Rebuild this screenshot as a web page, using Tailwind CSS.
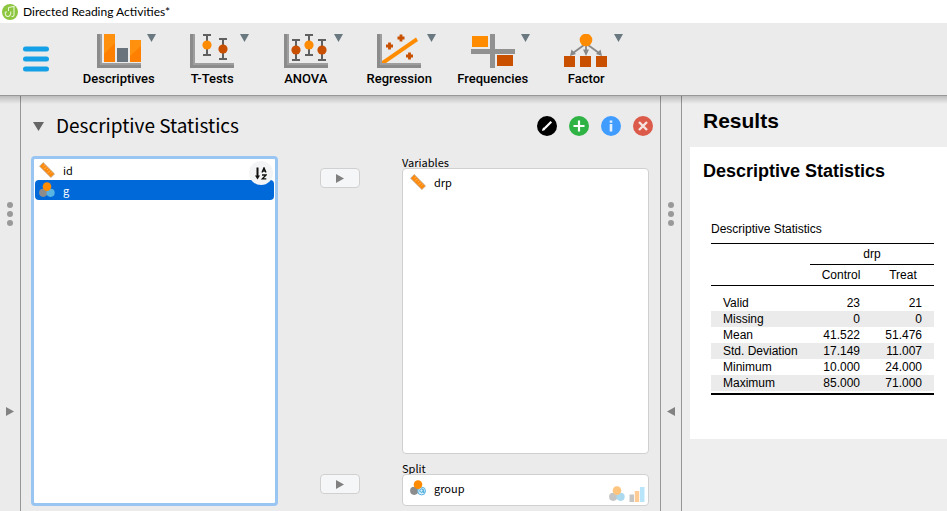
<!DOCTYPE html>
<html lang="en">
<head>
<meta charset="utf-8">
<title>Directed Reading Activities*</title>
<script src="https://cdn.jsdelivr.net/npm/@tailwindcss/browser@4"></script>
</head>
<body class="flex h-screen flex-col overflow-hidden bg-[#ebebeb] font-['Noto_Sans_CJK_JP',sans-serif] text-black">
<svg class="hidden" aria-hidden="true">
  <defs>
    <symbol id="scale" viewBox="0 0 16 16">
      <path d="M4.2 .6 L15.5 11.9 L11.9 15.5 L.6 4.2 Z" fill="#ff8a0c" stroke="#b9a48c" stroke-width=".8"/>
      <path d="M5.6 3.2 L4.4 4.4 M7.4 5 L5.4 7 M9.2 6.8 L8 8 M11 8.6 L9 10.6 M12.8 10.4 L11.6 11.6" stroke="#ffc076" stroke-width=".8"/>
    </symbol>
    <symbol id="nominal" viewBox="0 0 16 16">
      <circle cx="4.2" cy="10.8" r="4.1" fill="#8c8c8c"/>
      <circle cx="11.6" cy="10.8" r="4.1" fill="#59b4e2"/>
      <circle cx="8" cy="4.6" r="4.3" fill="#ff8c00"/>
    </symbol>
    <symbol id="nominal-text" viewBox="0 0 16 16">
      <circle cx="4.2" cy="10.8" r="4.1" fill="#8c8c8c"/>
      <circle cx="11.6" cy="11" r="3.9" fill="#d8effb" stroke="#59b4e2"/>
      <path d="M13.2 9.3 V12.2 Q13.8 13 14.6 12 M13.2 11 A1.7 1.7 0 1 1 13.2 10.2" fill="none" stroke="#2f9fd8"/>
      <circle cx="8" cy="4.6" r="4.3" fill="#ff8c00"/>
    </symbol>
    <symbol id="ordinal" viewBox="0 0 16 16">
      <path d="M.5 8.5 H5 V16 H.5Z" fill="#8c8c8c"/>
      <path d="M5.8 5 H10.2 V16 H5.8Z" fill="#ff9a30"/>
      <path d="M11 1 H15.5 V16 H11Z" fill="#74ccf6"/>
    </symbol>
    <symbol id="axes" viewBox="0 0 44 34">
      <path d="M0 0 H5 V29 H44 V34 H0Z" fill="#8b8b8b"/>
      <path d="M3 0 H5 V29 H44 V31 H3Z" fill="#9e9e9e"/>
    </symbol>
    <symbol id="whisker" viewBox="0 0 10 22">
      <path d="M1 1 H9 M5 1 V21 M1 21 H9" fill="none" stroke="#606060" stroke-width="2"/>
      <circle cx="5" cy="11" r="4.600" fill="currentColor"/>
    </symbol>
    <symbol id="plus" viewBox="0 0 8 8"><path d="M4 .5 V7.5 M.5 4 H7.5" stroke="#c85000" stroke-width="2.8"/></symbol>
    <symbol id="down" viewBox="0 0 9 8"><path d="M0 0 H9 L4.5 8Z" fill="#6a7880"/></symbol>
  </defs>
</svg>

<header class="flex h-[23px] shrink-0 items-center gap-[5px] bg-white pl-[2px]">
  <svg class="size-4" viewBox="0 0 16 16" aria-hidden="true">
    <circle cx="8" cy="8" r="8" fill="#8cc63f"/>
    <path d="M6.5 3.5 L12 2.5 V11 Q11.6 13 9.5 12.2 M6.5 3.5 V7 M3.2 8 Q3.2 13 6.2 12.5 Q8.8 12 8.8 7.5 M3.2 8 H5" fill="none" stroke="#e9f5d8" stroke-width="1.1"/>
  </svg>
  <h1 class="font-[Lato,sans-serif] text-[12px] leading-4">Directed Reading Activities*</h1>
</header>

<nav class="flex h-[73px] shrink-0 border-b border-[#979797]" aria-label="Analyses">
  <button class="flex w-[72px] items-center justify-center" aria-label="Menu">
    <svg class="h-7 w-[26px]" viewBox="0 0 26 28"><path d="M2.5 4 H23.5 M2.5 14 H23.5 M2.5 24 H23.5" stroke="#14a0e6" stroke-width="5" stroke-linecap="round"/></svg>
  </button>
  <div class="grid w-[561px] grid-cols-6 font-[Roboto,sans-serif] text-[13px] leading-4 font-medium">
    <button class="relative flex flex-col items-center gap-[3px] pt-[11px]">
      <svg class="h-[34px] w-11" viewBox="0 0 44 34"><use href="#axes"/><path d="M7 0 H18 V28 H7Z M33 6 H44 V28 H33Z" fill="#ff7f00"/><path d="M7 0 H18 V9 L7 20Z M33 6 H44 V12 L33 22Z" fill="#ff910f"/><path d="M20 14 H31 V28 H20Z" fill="#68737b"/></svg>
      Descriptives
      <svg class="absolute top-[11px] right-[10px] h-2 w-[9px]"><use href="#down"/></svg>
    </button>
    <button class="relative flex flex-col items-center gap-[3px] pt-[11px]">
      <svg class="h-[34px] w-11" viewBox="0 0 44 34"><use href="#axes"/><use href="#whisker" x="12" y="0" width="10" height="22" color="#ff8c00"/><use href="#whisker" x="28" y="4" width="10" height="22" color="#c85000"/></svg>
      T-Tests
      <svg class="absolute top-[11px] right-[10px] h-2 w-[9px]"><use href="#down"/></svg>
    </button>
    <button class="relative flex flex-col items-center gap-[3px] pt-[11px]">
      <svg class="h-[34px] w-11" viewBox="0 0 44 34"><use href="#axes"/><use href="#whisker" x="7" y="5" width="10" height="22" color="#c85000"/><use href="#whisker" x="20" y="0" width="10" height="22" color="#ff8c00"/><use href="#whisker" x="33" y="5" width="10" height="22" color="#c85000"/></svg>
      ANOVA
      <svg class="absolute top-[11px] right-[10px] h-2 w-[9px]"><use href="#down"/></svg>
    </button>
    <button class="relative flex flex-col items-center gap-[3px] pt-[11px]">
      <svg class="h-[34px] w-11" viewBox="0 0 44 34"><use href="#axes"/><path d="M5 29 V27 L39 3.5 L41 7 L9 29Z" fill="#ff8c00"/><use href="#plus" x="20" y="0" width="8" height="8"/><use href="#plus" x="8.5" y="8" width="8" height="8"/><use href="#plus" x="28.5" y="18" width="8" height="8"/></svg>
      Regression
      <svg class="absolute top-[11px] right-[10px] h-2 w-[9px]"><use href="#down"/></svg>
    </button>
    <button class="relative flex flex-col items-center gap-[3px] pt-[11px]">
      <svg class="h-[34px] w-11" viewBox="0 0 44 34"><path d="M0 15 H44 V20 H0Z M19 0 H24 V34 H19Z" fill="#919191"/><path d="M1 2 H17 V13 H1Z" fill="#ff8c00"/><path d="M26 21 H42 V32 H26Z" fill="#c85000"/></svg>
      Frequencies
      <svg class="absolute top-[11px] right-[10px] h-2 w-[9px]"><use href="#down"/></svg>
    </button>
    <button class="relative flex flex-col items-center gap-[3px] pt-[11px]">
      <svg class="h-[34px] w-11" viewBox="0 0 44 34"><path d="M20 11 L9 19 M22 11 V18 M24 11 L35 19" stroke="#888" stroke-width="1.8"/><path d="M6 22 L7.5 15.5 L12 20Z M19 15.5 H25 L22 22Z M38 22 L36.5 15.5 L32 20Z" fill="#888"/><circle cx="22" cy="6" r="6.3" fill="#ff8c00"/><path d="M0 22 H11 V33 H0Z M16 22 H27 V33 H16Z M32 22 H43 V33 H32Z" fill="#c85000"/></svg>
      Factor
      <svg class="absolute top-[11px] right-[10px] h-2 w-[9px]"><use href="#down"/></svg>
    </button>
  </div>
</nav>

<main class="relative flex min-h-0 flex-1">
  <div class="pointer-events-none absolute inset-x-0 top-0 h-2 bg-linear-to-b from-black/20 to-transparent"></div>

  <aside class="flex w-[21px] shrink-0 flex-col items-center border-r border-[#979797] pt-[105px]">
    <svg class="h-[26px] w-[6px]" viewBox="0 0 6 26" fill="#999" aria-hidden="true"><circle cx="3" cy="4" r="3"/><circle cx="3" cy="13" r="3"/><circle cx="3" cy="22" r="3"/></svg>
    <button class="mt-[180px]" aria-label="Show data"><svg class="h-[9px] w-2" viewBox="0 0 8 9"><path d="M0 0 L8 4.5 L0 9Z" fill="#828282"/></svg></button>
  </aside>

  <section class="flex min-w-0 flex-1 flex-col pr-[11px] pb-[5px] pl-[10px]">
    <div class="flex h-[60px] shrink-0 items-center">
      <button class="flex items-center gap-3 pl-[2px]">
        <svg class="h-[9px] w-[11px]" viewBox="0 0 11 9"><path d="M0 0 H11 L5.5 9Z" fill="#666"/></svg>
        <span class="pb-[2px] text-[19px] leading-6">Descriptive Statistics</span>
      </button>
      <div class="-mr-1 ml-auto flex gap-3">
        <button aria-label="Edit title"><svg class="size-5" viewBox="0 0 20 20"><circle cx="10" cy="10" r="10"/><path d="M8 12 L14.3 5.7" stroke="#fff" stroke-width="2.2"/><path d="M5 15 Q5.3 11.5 7.6 11.3 L8.9 12.6 Q8 14.8 5 15Z" fill="#fff"/></svg></button>
        <button aria-label="Duplicate"><svg class="size-5" viewBox="0 0 20 20"><circle cx="10" cy="10" r="10" fill="#2fb344"/><path d="M10 4.5 V15.5 M4.5 10 H15.5" stroke="#fff" stroke-width="2.2"/></svg></button>
        <button aria-label="Help"><svg class="size-5" viewBox="0 0 20 20"><circle cx="10" cy="10" r="10" fill="#419cff"/><path d="M10 8 V15.5 M10 4.5 V6.7" stroke="#e4f1ff" stroke-width="2.6"/></svg></button>
        <button aria-label="Remove"><svg class="size-5" viewBox="0 0 20 20"><circle cx="10" cy="10" r="10" fill="#dc5a49"/><path d="M6 6 L14 14 M14 6 L6 14" stroke="#f6e4e1" stroke-width="2.4"/></svg></button>
      </div>
    </div>

    <div class="grid min-h-0 flex-1 grid-cols-[1fr_124px_1fr] text-[11px] leading-5">
      <div class="relative rounded-[4px] border-3 border-[#99c5f3] bg-white p-px">
        <ul>
          <li><button class="flex h-5 w-full items-center gap-2 rounded-[4px] pl-1"><svg class="size-4"><use href="#scale"/></svg>id</button></li>
          <li><button class="flex h-5 w-full items-center gap-2 rounded-[4px] bg-[#0069d9] pl-1 text-white"><svg class="size-4"><use href="#nominal"/></svg>g</button></li>
        </ul>
        <button class="absolute top-[2px] right-[2px] flex size-6 items-center justify-center rounded-full bg-[#f3f4f6]" aria-label="Sort">
          <svg class="h-[13px] w-3" viewBox="0 0 12 13" fill="none" stroke="#111"><path d="M2.5 .5 V9" stroke-width="2"/><path d="M0 8.5 H5 L2.5 12.5Z" fill="#111" stroke="none"/><path d="M7 5.5 L9 .8 L11 5.5 M7.7 4 H10.3 M7 8 H11 L7.3 11.8 H11.3" stroke-width="1.3"/></svg>
        </button>
      </div>

      <div class="flex flex-col items-center justify-between pt-3 pb-3">
        <button class="flex h-5 w-10 items-center justify-center rounded-[4px] border border-[#d0d0d0] bg-[#f5f6f8]" aria-label="Move to Variables"><svg class="h-[9px] w-2" viewBox="0 0 8 9"><path d="M0 0 L8 4.5 L0 9Z" fill="#808080"/></svg></button>
        <button class="flex h-5 w-10 items-center justify-center rounded-[4px] border border-[#d0d0d0] bg-[#f5f6f8]" aria-label="Move to Split"><svg class="h-[9px] w-2" viewBox="0 0 8 9"><path d="M0 0 L8 4.5 L0 9Z" fill="#808080"/></svg></button>
      </div>

      <div class="flex flex-col">
        <h2 class="leading-3">Variables</h2>
        <div class="flex-1 rounded-[4px] border border-[#d0d0d0] bg-white px-[7px] py-[3px]">
          <button class="flex h-5 items-center gap-2"><svg class="size-4"><use href="#scale"/></svg>drp</button>
        </div>
        <h2 class="mt-2 leading-3">Split</h2>
        <div class="flex h-8 items-end rounded-[4px] border border-[#d0d0d0] bg-white py-[3px] pr-[3px] pl-[7px]">
          <button class="flex h-5 items-center gap-2 self-start"><svg class="size-4"><use href="#nominal-text"/></svg>group</button>
          <div class="ml-auto flex gap-1 opacity-50" aria-hidden="true"><svg class="size-4"><use href="#nominal"/></svg><svg class="size-4"><use href="#ordinal"/></svg></div>
        </div>
      </div>
    </div>
  </section>

  <aside class="flex w-[22px] shrink-0 flex-col items-center border-x border-[#979797] pt-[105px]">
    <svg class="h-[26px] w-[6px]" viewBox="0 0 6 26" fill="#999" aria-hidden="true"><circle cx="3" cy="4" r="3"/><circle cx="3" cy="13" r="3"/><circle cx="3" cy="22" r="3"/></svg>
    <button class="mt-[180px]" aria-label="Hide results"><svg class="h-[9px] w-2" viewBox="0 0 8 9"><path d="M8 0 L0 4.5 L8 9Z" fill="#828282"/></svg></button>
  </aside>

  <section class="w-[265px] shrink-0 bg-[#eee] pl-2 font-['Liberation_Sans',Arial,sans-serif]">
    <h2 class="flex h-[51px] items-center px-[13px] pb-[2px] text-[21px] leading-6 font-bold">Results</h2>
    <article class="bg-white px-[13px] pt-3 pb-11">
      <h3 class="text-[18px] leading-6 font-bold">Descriptive Statistics</h3>
      <table class="mt-9 ml-2 w-[223px] table-fixed border-separate border-spacing-0 text-[12px] leading-4">
        <caption class="pb-1 text-left leading-5">Descriptive Statistics</caption>
        <colgroup><col class="w-[99px]"><col class="w-[62px]"><col class="w-[62px]"></colgroup>
        <thead>
          <tr class="h-[21px]"><td rowspan="2" class="border-y border-black"></td><th colspan="2" class="border-t border-black font-normal">drp</th></tr>
          <tr class="h-[22px]"><th class="border-y border-black font-normal">Control</th><th class="border-y border-black font-normal">Treat</th></tr>
        </thead>
        <tbody class="text-right">
          <tr class="h-[9px]"><td colspan="3"></td></tr>
          <tr><th class="pl-3 text-left font-normal">Valid</th><td class="pr-3">23</td><td class="pr-3">21</td></tr>
          <tr class="bg-[#ebebeb]"><th class="pl-3 text-left font-normal">Missing</th><td class="pr-3">0</td><td class="pr-3">0</td></tr>
          <tr><th class="pl-3 text-left font-normal">Mean</th><td class="pr-3">41.522</td><td class="pr-3">51.476</td></tr>
          <tr class="bg-[#ebebeb]"><th class="pl-3 text-left font-normal">Std. Deviation</th><td class="pr-3">17.149</td><td class="pr-3">11.007</td></tr>
          <tr><th class="pl-3 text-left font-normal">Minimum</th><td class="pr-3">10.000</td><td class="pr-3">24.000</td></tr>
          <tr class="bg-[#ebebeb]"><th class="pl-3 text-left font-normal">Maximum</th><td class="pr-3">85.000</td><td class="pr-3">71.000</td></tr>
          <tr class="h-1"><td colspan="3" class="border-b-2 border-black"></td></tr>
        </tbody>
      </table>
    </article>
  </section>
</main>
</body>
</html>
